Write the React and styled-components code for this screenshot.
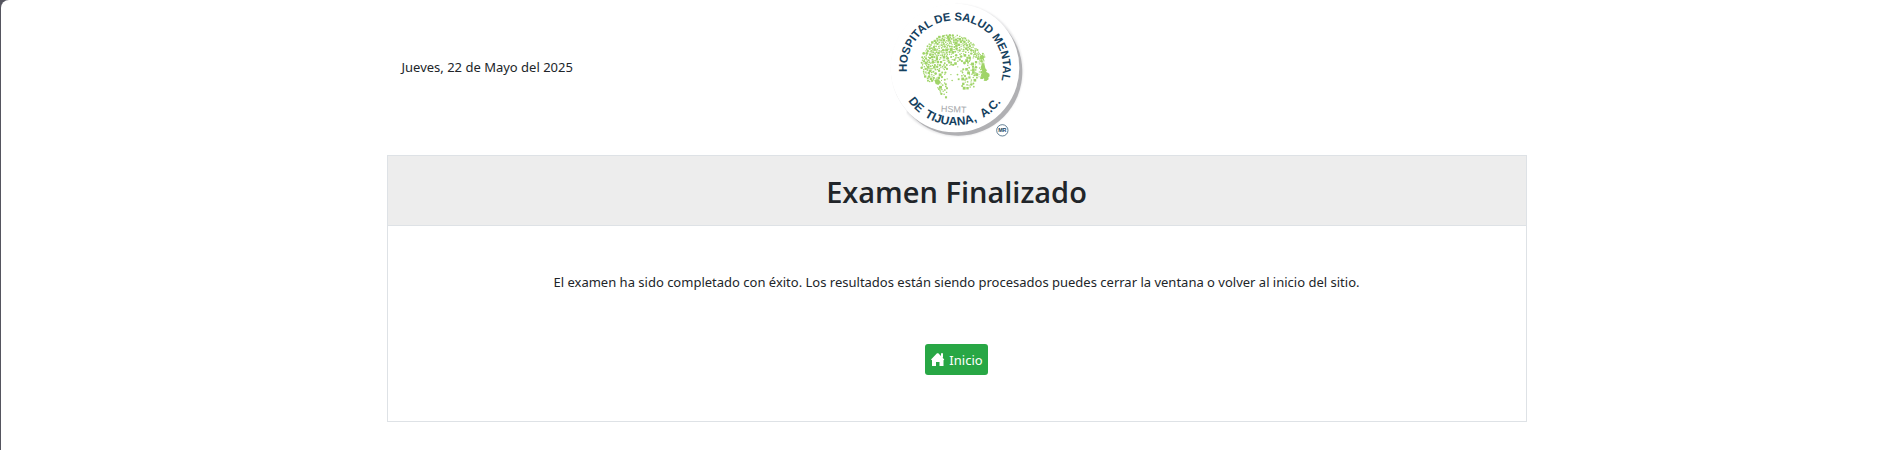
import React from "react";
import styled, { createGlobalStyle } from "styled-components";

const GlobalStyle = createGlobalStyle`
  *, *::before, *::after { box-sizing: border-box; }
  html { min-height: 100%; background: #55555f; }
  body {
    margin: 0;
    color: #212529;
    font-family: "Segoe UI", "Noto Sans", "Open Sans", sans-serif;
    font-size: 13px;
    line-height: 20px;
  }
`;

const Page = styled.div`
  min-height: 100vh;
  margin-left: 1px;
  padding-left: 16px;
  background: #fff;
  border-top-left-radius: 8px;
`;

const Container = styled.div`
  width: 100%;
  max-width: 1140px;
  margin: 0 auto;
`;

const Header = styled.header`
  display: grid;
  grid-template-columns: 1fr auto 1fr;
  align-items: center;
  padding: 0 15px 5px;
`;

const DateText = styled.p`
  margin: 0 0 16px;
`;

const LogoArt = styled.svg`
  display: block;
  width: 160px;
  height: 150px;
  font-family: "Liberation Sans", Arial, sans-serif;
`;

const Card = styled.main`
  border: 1px solid #dee2e6;
  text-align: center;
`;

const CardHeader = styled.div`
  padding: 18px 16px 16px;
  background: #ededed;
  border-bottom: 1px solid #dee2e6;
`;

const Title = styled.h1`
  margin: 0;
  font-family: "Segoe UI", "Open Sans", "Noto Sans", sans-serif;
  font-size: 29px;
  line-height: 35px;
  font-weight: 600;
`;

const CardBody = styled.div`
  display: flex;
  flex-direction: column;
  align-items: center;
  gap: 52px;
  padding: 46px 20px;
`;

const Message = styled.p`
  margin: 0;
`;

const HomeButton = styled.button`
  display: flex;
  align-items: center;
  gap: 4px;
  height: 31px;
  padding: 0 5px;
  border: 0;
  border-radius: 3px;
  background: #28a745;
  color: #fff;
  font: inherit;
  cursor: pointer;
`;

const HomeIcon = () => (
  <svg width="15" height="15" viewBox="0 0 15 15" fill="currentColor" aria-hidden="true">
    <path d="M7 1.200L8.300 1.200L14.300 7.400L13.500 8.300V14H9.500V10H6V14H2V8.300L1 7.400Z" />
    <path d="M11 1.200h2v5l-2-2z" />
  </svg>
);

// Speckles that form the profile: packed along the skull, sparse toward the centre.
function makeSpeckles() {
  let seed = 41;
  const rand = () => {
    seed = (seed * 16807) % 2147483647;
    return seed / 2147483647;
  };
  const out = [];
  for (let i = 0; i < 12000 && out.length < 620; i++) {
    const x = 122 + rand() * 210;
    const y = 102 + rand() * 194;
    const skull = Math.hypot((x - 214) / 90, (y - 190) / 86) < 1 && y < 245;
    const neck = y >= 225 && y < 294 && x > 150 + (y - 225) * 0.6 && x < 195 + (y - 225) * 0.15;
    const jaw = x > 245 && x < 282 && y > 205 && y < 266;
    const face = x > 285 && x < 314 && y > 160 && y < 236;
    if (!skull && !neck && !jaw && !face) continue;
    const hollow = Math.hypot((x - 236) / 76, (y - 232) / 78);
    const chance = jaw ? 0.2 : neck && y > 255 ? 0.14 : hollow < 0.55 ? 0.012 : hollow < 1 ? 0.14 : 1;
    if (rand() > chance) continue;
    const r = 1.6 + rand() * 2.8;
    if (out.some((p) => Math.hypot(p.x - x, p.y - y) < (p.r + r) * 0.98)) continue;
    out.push({ x, y, r, square: rand() > 0.5 });
  }
  return out;
}
const speckles = makeSpeckles();

const Logo = () => (
  <LogoArt viewBox="-9 0 480 450" role="img" aria-label="Hospital de Salud Mental de Tijuana, A.C.">
    <defs>
      <path id="arcTop" d="M81 216A144 144 0 0 1 225 61A144 144 0 0 1 369 205A144 144 0 0 1 340 291" />
      <path id="arcBottom" d="M54 205A171 171 0 0 0 396 205" />
      <filter id="soft" x="-10%" y="-10%" width="120%" height="120%">
        <feGaussianBlur stdDeviation="3" />
      </filter>
    </defs>
    <circle cx="231" cy="211" r="197" fill="#dedee0" filter="url(#soft)" />
    <circle cx="235" cy="215" r="192" fill="#b0b0b3" />
    <circle cx="225" cy="204" r="193" fill="#fff" />
    <path d="M-9 0H225V11A193 193 0 0 0 80 332L70 450H-9z" fill="#fff" />
    <g fill="#a0d468">
      {speckles.map((p, i) =>
        p.square ? (
          <rect key={i} x={p.x - p.r} y={p.y - p.r} width={p.r * 2} height={p.r * 2} />
        ) : (
          <circle key={i} cx={p.x} cy={p.y} r={p.r} />
        )
      )}
      <path d="M298 170l9-6 6 6-2 7-7 3z" />
      <path d="M306 190l7 1 3 14 5 6-3 4 10 6 1 8-4 3 1 6-7 5-8-1 2-5-8-5-3-7 5-6-1-10-4-5z" />
      <path d="M163 240l12-3 8 10-8 8-8-3z" />
    </g>
    <g fill="#14405e" fontSize="34" fontWeight="700">
      <text><textPath href="#arcTop" startOffset="0">HOSPITAL DE SALUD MENTAL</textPath></text>
      <text fontSize="36"><textPath href="#arcBottom" startOffset="104">DE</textPath></text>
      <text fontSize="36"><textPath href="#arcBottom" startOffset="171">TIJUANA,</textPath></text>
      <text fontSize="36"><textPath href="#arcBottom" startOffset="357">A.C.</textPath></text>
    </g>
    <text x="182" y="335" fontSize="27" fill="#a5a7aa" transform="rotate(3 182 335)">HSMT</text>
    <circle cx="367" cy="391" r="17" fill="#fff" stroke="#14405e" strokeWidth="2" />
    <text x="367" y="397" fontSize="16" fontWeight="700" fill="#14405e" textAnchor="middle">MR</text>
  </LogoArt>
);

export default function App() {
  return (
    <>
      <GlobalStyle />
      <Page>
        <Container>
          <Header>
            <DateText>Jueves, 22 de Mayo del 2025</DateText>
            <Logo />
          </Header>
          <Card>
            <CardHeader>
              <Title>Examen Finalizado</Title>
            </CardHeader>
            <CardBody>
              <Message>
                El examen ha sido completado con éxito. Los resultados están siendo procesados puedes cerrar la ventana o volver al inicio del sitio.
              </Message>
              <HomeButton type="button">
                <HomeIcon />
                Inicio
              </HomeButton>
            </CardBody>
          </Card>
        </Container>
      </Page>
    </>
  );
}
